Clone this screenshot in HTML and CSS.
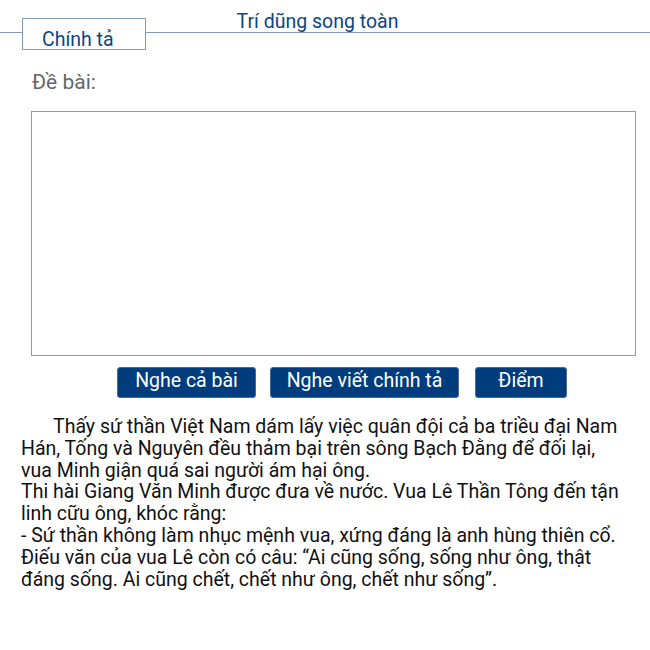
FILE: index.html
```html
<!DOCTYPE html>
<html lang="vi">
<head>
<meta charset="utf-8">
<title>Chính tả - Trí dũng song toàn</title>
<link rel="stylesheet" href="styles.css">
</head>
<body>
  <header class="topbar">
    <div class="tab">Chính tả</div>
    <h1 class="title">Trí dũng song toàn</h1>
  </header>

  <main class="exercise">
    <div class="label">Đề bài:</div>
    <textarea class="answer" aria-label="Bài viết"></textarea>

    <div class="actions">
      <button class="btn btn-listen">Nghe cả bài</button>
      <button class="btn btn-dictate">Nghe viết chính tả</button>
      <button class="btn btn-score">Điểm</button>
    </div>
  </main>

  <p class="passage">Thấy sứ thần Việt Nam dám lấy việc quân đội cả ba triều đại Nam Hán, Tống và Nguyên đều thảm bại trên sông Bạch Đằng để đối lại, vua Minh giận quá sai người ám hại ông.<br>Thi hài Giang Văn Minh được đưa về nước. Vua Lê Thần Tông đến tận linh cữu ông, khóc rằng:<br>- Sứ thần không làm nhục mệnh vua, xứng đáng là anh hùng thiên cổ.<br>Điếu văn của vua Lê còn có câu: “Ai cũng sống, sống như ông, thật đáng sống. Ai cũng chết, chết như ông, chết như sống”.</p>
</body>
</html>
```

FILE: styles.css
```css
html, body {
  margin: 0;
  padding: 0;
  background: #ffffff;
}

body {
  font-family: Roboto, "Liberation Sans", sans-serif;
  font-size: 19px;
  line-height: 22px;
  color: #111111;
}

/* top bar: rule across the page with the tab sitting on it */
.topbar {
  position: relative;
  height: 32px;
  border-bottom: 1px solid #7f9cc0;
  display: flex;
  justify-content: center;
}

.title {
  margin: 0;
  padding: 11px 15px 0 0;
  font-size: 19.5px;
  font-weight: 400;
  line-height: 22px;
  color: #0b4586;
}

.tab {
  position: absolute;
  left: 22px;
  top: 18px;
  box-sizing: border-box;
  width: 124px;
  height: 32px;
  padding: 10px 0 0 19px;
  background: #ffffff;
  border: 1px solid #7f9cc0;
  color: #0b4586;
  font-size: 19.5px;
  line-height: 22px;
}

.exercise {
  padding: 37px 0 0 31px;
}

.label {
  font-size: 21px;
  line-height: 24px;
  color: #666666;
  padding-left: 1px;
}

.answer {
  display: block;
  box-sizing: border-box;
  width: 605px;
  height: 245px;
  margin: 17px 0 0 0;
  padding: 4px;
  border: 1px solid #7f9cc0;
  border-radius: 0;
  resize: none;
  font: inherit;
  outline: none;
}

.actions {
  display: flex;
  padding-left: 86px;
  margin-top: 11px;
}

.btn {
  box-sizing: border-box;
  height: 31px;
  padding: 0 0 3px 0;
  margin: 0;
  background: #013d7d;
  border: 1px solid #49698f;
  border-radius: 3px;
  color: #ffffff;
  font-family: Roboto, "Liberation Sans", sans-serif;
  font-size: 19.5px;
  line-height: 26px;
  text-align: center;
}

.btn-listen { width: 139px; }
.btn-dictate { width: 189px; margin-left: 14px; }
.btn-score { width: 92px; margin-left: 16px; }

.passage {
  margin: 18px 0 0 21px;
  width: 606px;
  text-indent: 32px;
  font-size: 19.5px;
  line-height: 21.8px;
  color: #111111;
}
```
